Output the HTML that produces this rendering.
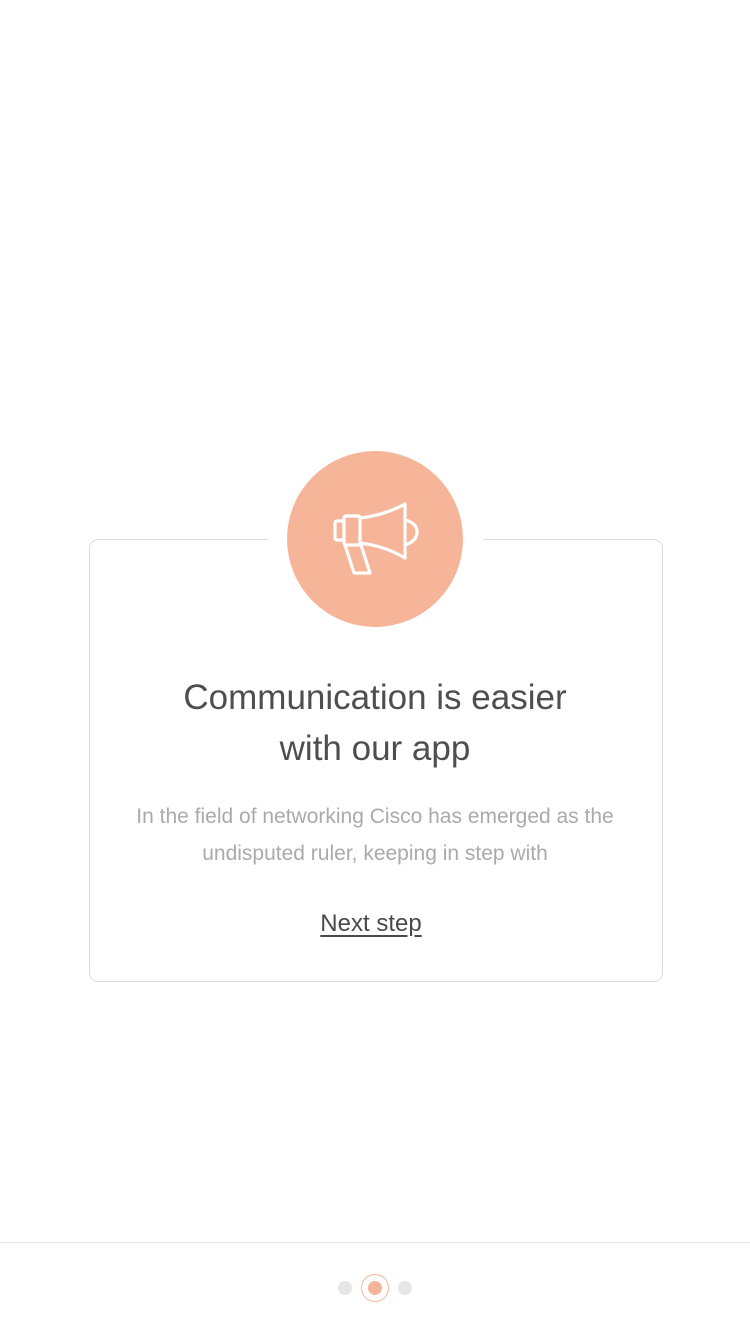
<!DOCTYPE html>
<html><head><style>
body{margin:0;width:750px;height:1334px;background:#fff;font-family:"Liberation Sans",sans-serif;position:relative;overflow:hidden}
.card{position:absolute;left:89px;top:539px;width:572px;height:441px;border:1px solid #dcdcdc;border-radius:9px}
.gap{position:absolute;left:268px;top:530px;width:215px;height:20px;background:#fff}
.circ{position:absolute;left:287px;top:451px;width:176px;height:176px;border-radius:50%;background:#f6b599}
h1{position:absolute;left:0;width:750px;top:672px;margin:0;text-align:center;font-weight:normal;font-size:35px;line-height:51px;color:#4e4e4e}
p{position:absolute;left:0;width:750px;top:798px;margin:0;text-align:center;font-size:21px;line-height:37px;color:#aaa}
a{position:absolute;left:0;width:742px;top:910px;text-align:center;font-size:24px;color:#4a4a4a;text-decoration:underline;text-underline-offset:4px}
.line{position:absolute;left:0;top:1242px;width:750px;height:1px;background:#e6e6e6}
.d{position:absolute;border-radius:50%}
</style></head><body>
<div class="card"></div><div class="gap"></div><div class="circ"></div>
<svg style="position:absolute;left:0;top:0" width="750" height="700">
<g fill="none" stroke="#fff" stroke-width="3.2" stroke-linejoin="round" stroke-linecap="round">
<rect x="335" y="521" width="9" height="19" rx="2"/>
<rect x="344" y="516" width="16" height="29" rx="2"/>
<path d="M360 518 Q385 515 405 504 L405 558 Q385 546 360 543"/>
<path d="M405 520 Q417 523 417 532 Q417 541 405 545"/>
<path d="M345 545 L354 573 L370 573 L361 545"/>
</g></svg>
<h1>Communication is easier<br>with our app</h1>
<p>In the field of networking Cisco has emerged as the<br>undisputed ruler, keeping in step with</p>
<a>Next step</a>
<div class="line"></div>
<div class="d" style="left:338px;top:1281px;width:14px;height:14px;background:#e6e6e6"></div>
<div class="d" style="left:398px;top:1281px;width:14px;height:14px;background:#e6e6e6"></div>
<div class="d" style="left:361px;top:1274px;width:26px;height:26px;border:1px solid #f6b599"></div>
<div class="d" style="left:368px;top:1281px;width:14px;height:14px;background:#f6b599"></div>
</body></html>
